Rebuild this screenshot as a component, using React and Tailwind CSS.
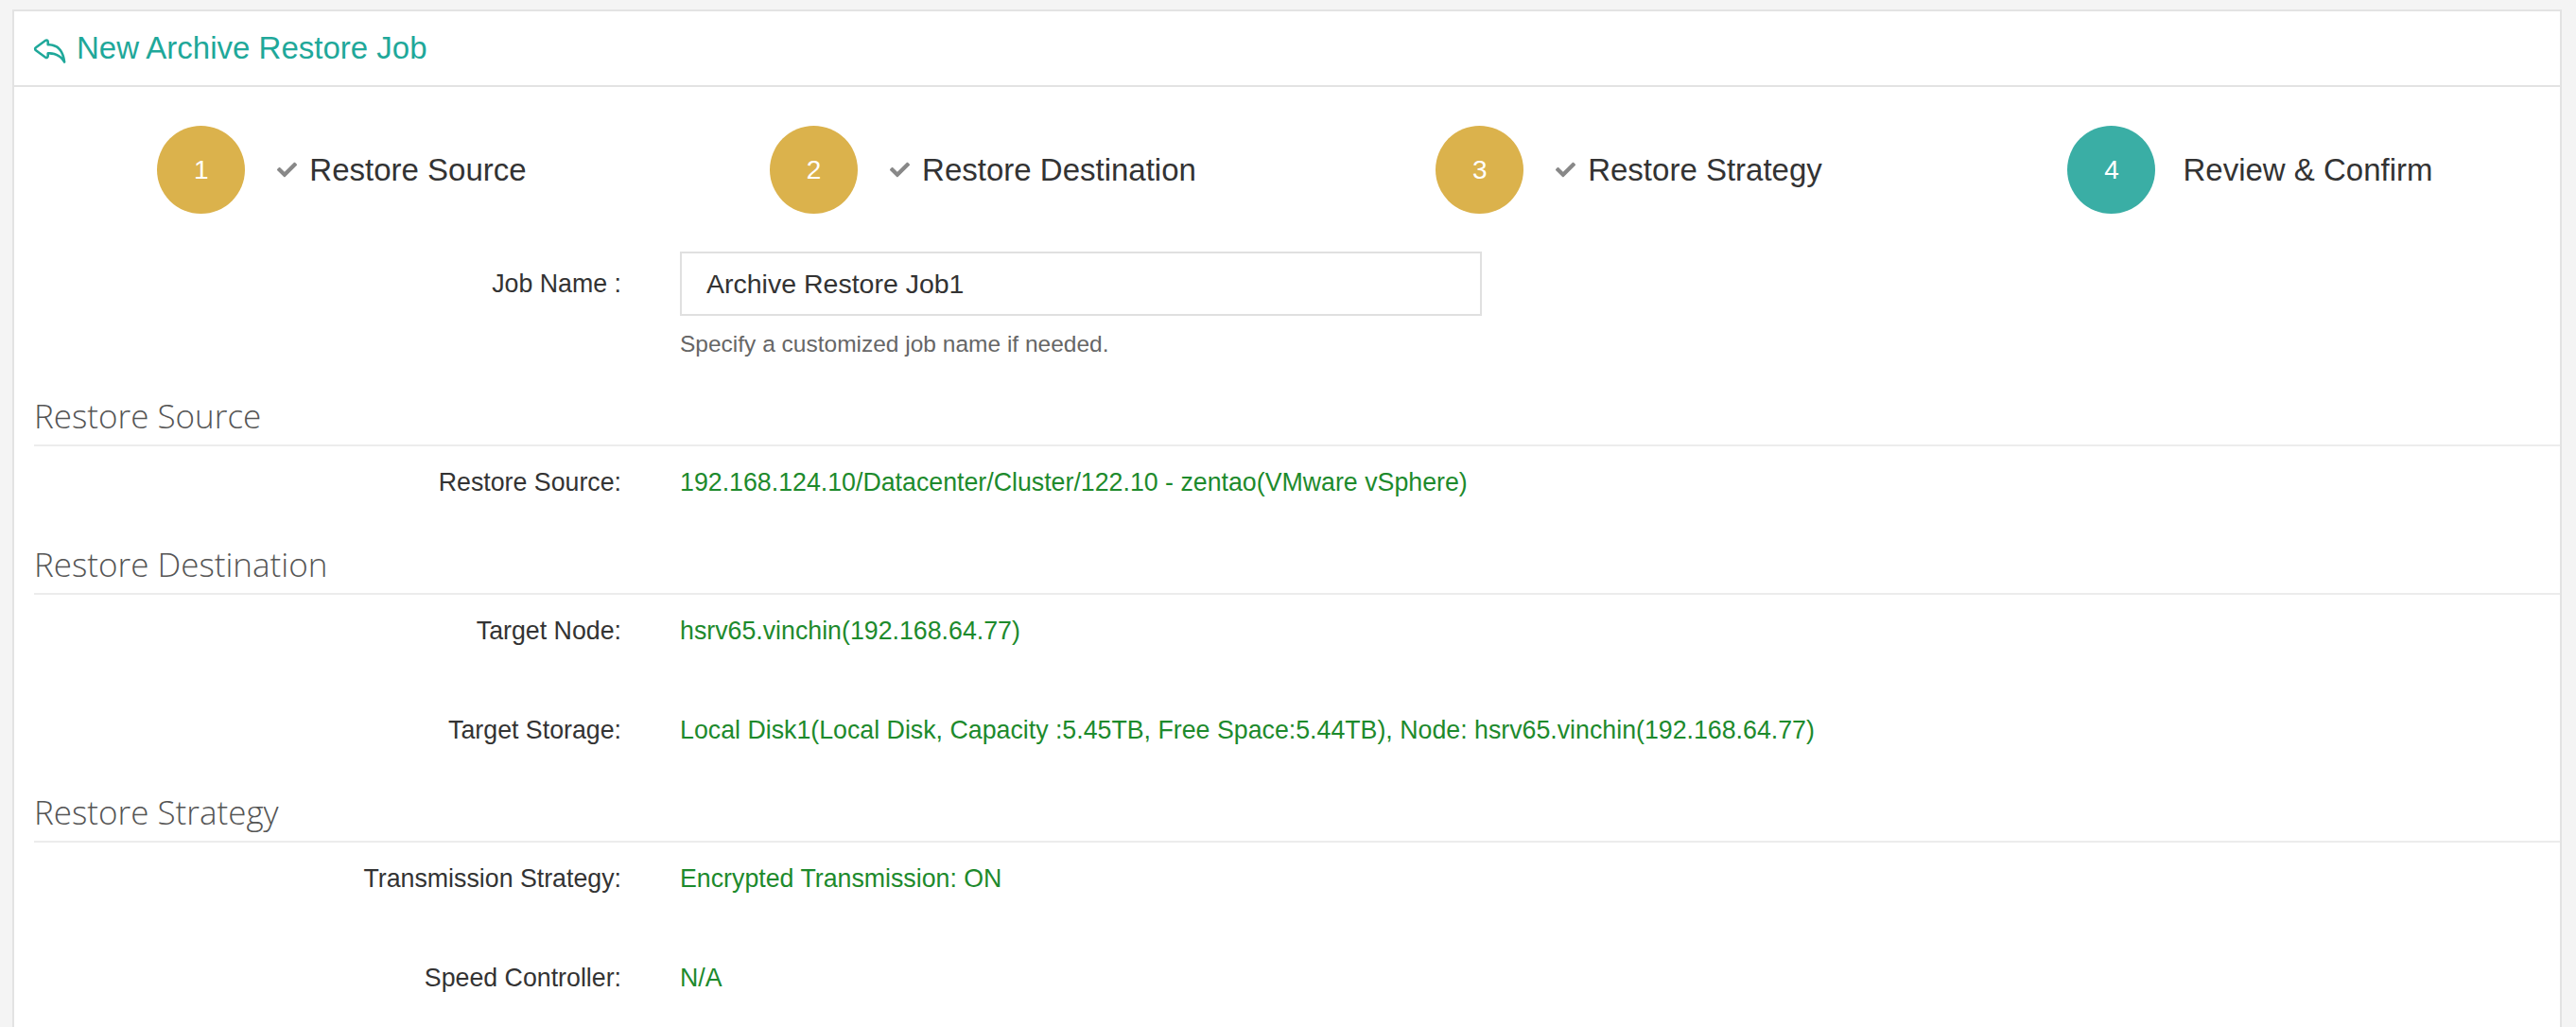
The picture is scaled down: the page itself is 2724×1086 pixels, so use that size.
import { BsReply } from "react-icons/bs";
import { FaCheck } from "react-icons/fa";

const steps = [
  { n: 1, label: "Restore Source", done: true, pad: "pl-[20px]" },
  { n: 2, label: "Restore Destination", done: true, pad: "pl-[30px]" },
  { n: 3, label: "Restore Strategy", done: true, pad: "pl-[50px]" },
  { n: 4, label: "Review & Confirm", done: false, pad: "pl-[18px]" },
];

const sections = [
  {
    title: "Restore Source",
    rows: [["Restore Source:", "192.168.124.10/Datacenter/Cluster/122.10 - zentao(VMware vSphere)"]],
  },
  {
    title: "Restore Destination",
    rows: [
      ["Target Node:", "hsrv65.vinchin(192.168.64.77)"],
      [
        "Target Storage:",
        "Local Disk1(Local Disk, Capacity :5.45TB, Free Space:5.44TB), Node: hsrv65.vinchin(192.168.64.77)",
      ],
    ],
  },
  {
    title: "Restore Strategy",
    rows: [
      ["Transmission Strategy:", "Encrypted Transmission: ON"],
      ["Speed Controller:", "N/A"],
    ],
  },
];

const Step = ({ n, label, done, pad }) => (
  <div className={`flex items-center justify-center ${pad}`}>
    <div
      className={`flex h-[93px] w-[93px] shrink-0 items-center justify-center rounded-full text-[28px] text-white ${
        n === 4 ? "bg-[#3aaea5]" : "bg-[#dbb24c]"
      }`}
    >
      {n}
    </div>
    {done ? (
      <>
        <FaCheck className="ml-[34px] text-[21px] text-[#888]" />
        <span className="ml-[13px] text-[33px] text-[#333]">{label}</span>
      </>
    ) : (
      <span className="ml-[29px] text-[33px] text-[#333]">{label}</span>
    )}
  </div>
);

const Row = ({ label, value }) => (
  <div className="flex h-[76px] items-center">
    <div className="w-[642px] shrink-0 text-right text-[26.75px] text-[#333]">{label}</div>
    <div className="ml-[62px] text-[26.75px] text-[#1d8a2c]">{value}</div>
  </div>
);

export default function App() {
  return (
    <div
      className="min-h-screen bg-[#f4f4f4] pl-[13px] pr-[15px] pt-[10px]"
      style={{ fontFamily: '"Liberation Sans", Arial, sans-serif' }}
    >
      <div className="min-h-[1100px] border-2 border-b-0 border-[#e3e3e3] bg-white">
        <div className="flex h-[80px] items-center border-b-2 border-[#e3e3e3] pl-[17px]">
          <BsReply className="text-[41px] text-[#1fa89a]" />
          <span className="ml-[8px] text-[33px] text-[#1fa89a]">New Archive Restore Job</span>
        </div>

        <div className="grid grid-cols-4 pt-[41px]">
          {steps.map((s) => (
            <Step key={s.n} {...s} />
          ))}
        </div>

        <div className="mt-[40px] flex items-center">
          <div className="w-[642px] shrink-0 text-right text-[26.75px] text-[#333]">Job Name :</div>
          <input
            readOnly
            value="Archive Restore Job1"
            className="ml-[62px] h-[68px] w-[848px] border-2 border-[#e0e0e0] px-[26px] text-[28.5px] text-[#333] outline-none"
          />
        </div>
        <div className="ml-[704px] mt-[15px] text-[24.5px] leading-[30px] text-[#666]">
          Specify a customized job name if needed.
        </div>

        <div className="mt-[39px]">
          {sections.map((sec) => (
            <div key={sec.title} className="mb-[27px]">
              <div
                className="ml-[21px] border-b-2 border-[#ececec] pb-[8px] text-[35px] font-light leading-[44px] text-[#555]"
                style={{ fontFamily: '"Open Sans", sans-serif' }}
              >
                {sec.title}
              </div>
              <div className="flex flex-col gap-[29px]">
                {sec.rows.map(([l, v]) => (
                  <Row key={l} label={l} value={v} />
                ))}
              </div>
            </div>
          ))}
        </div>
      </div>
    </div>
  );
}
